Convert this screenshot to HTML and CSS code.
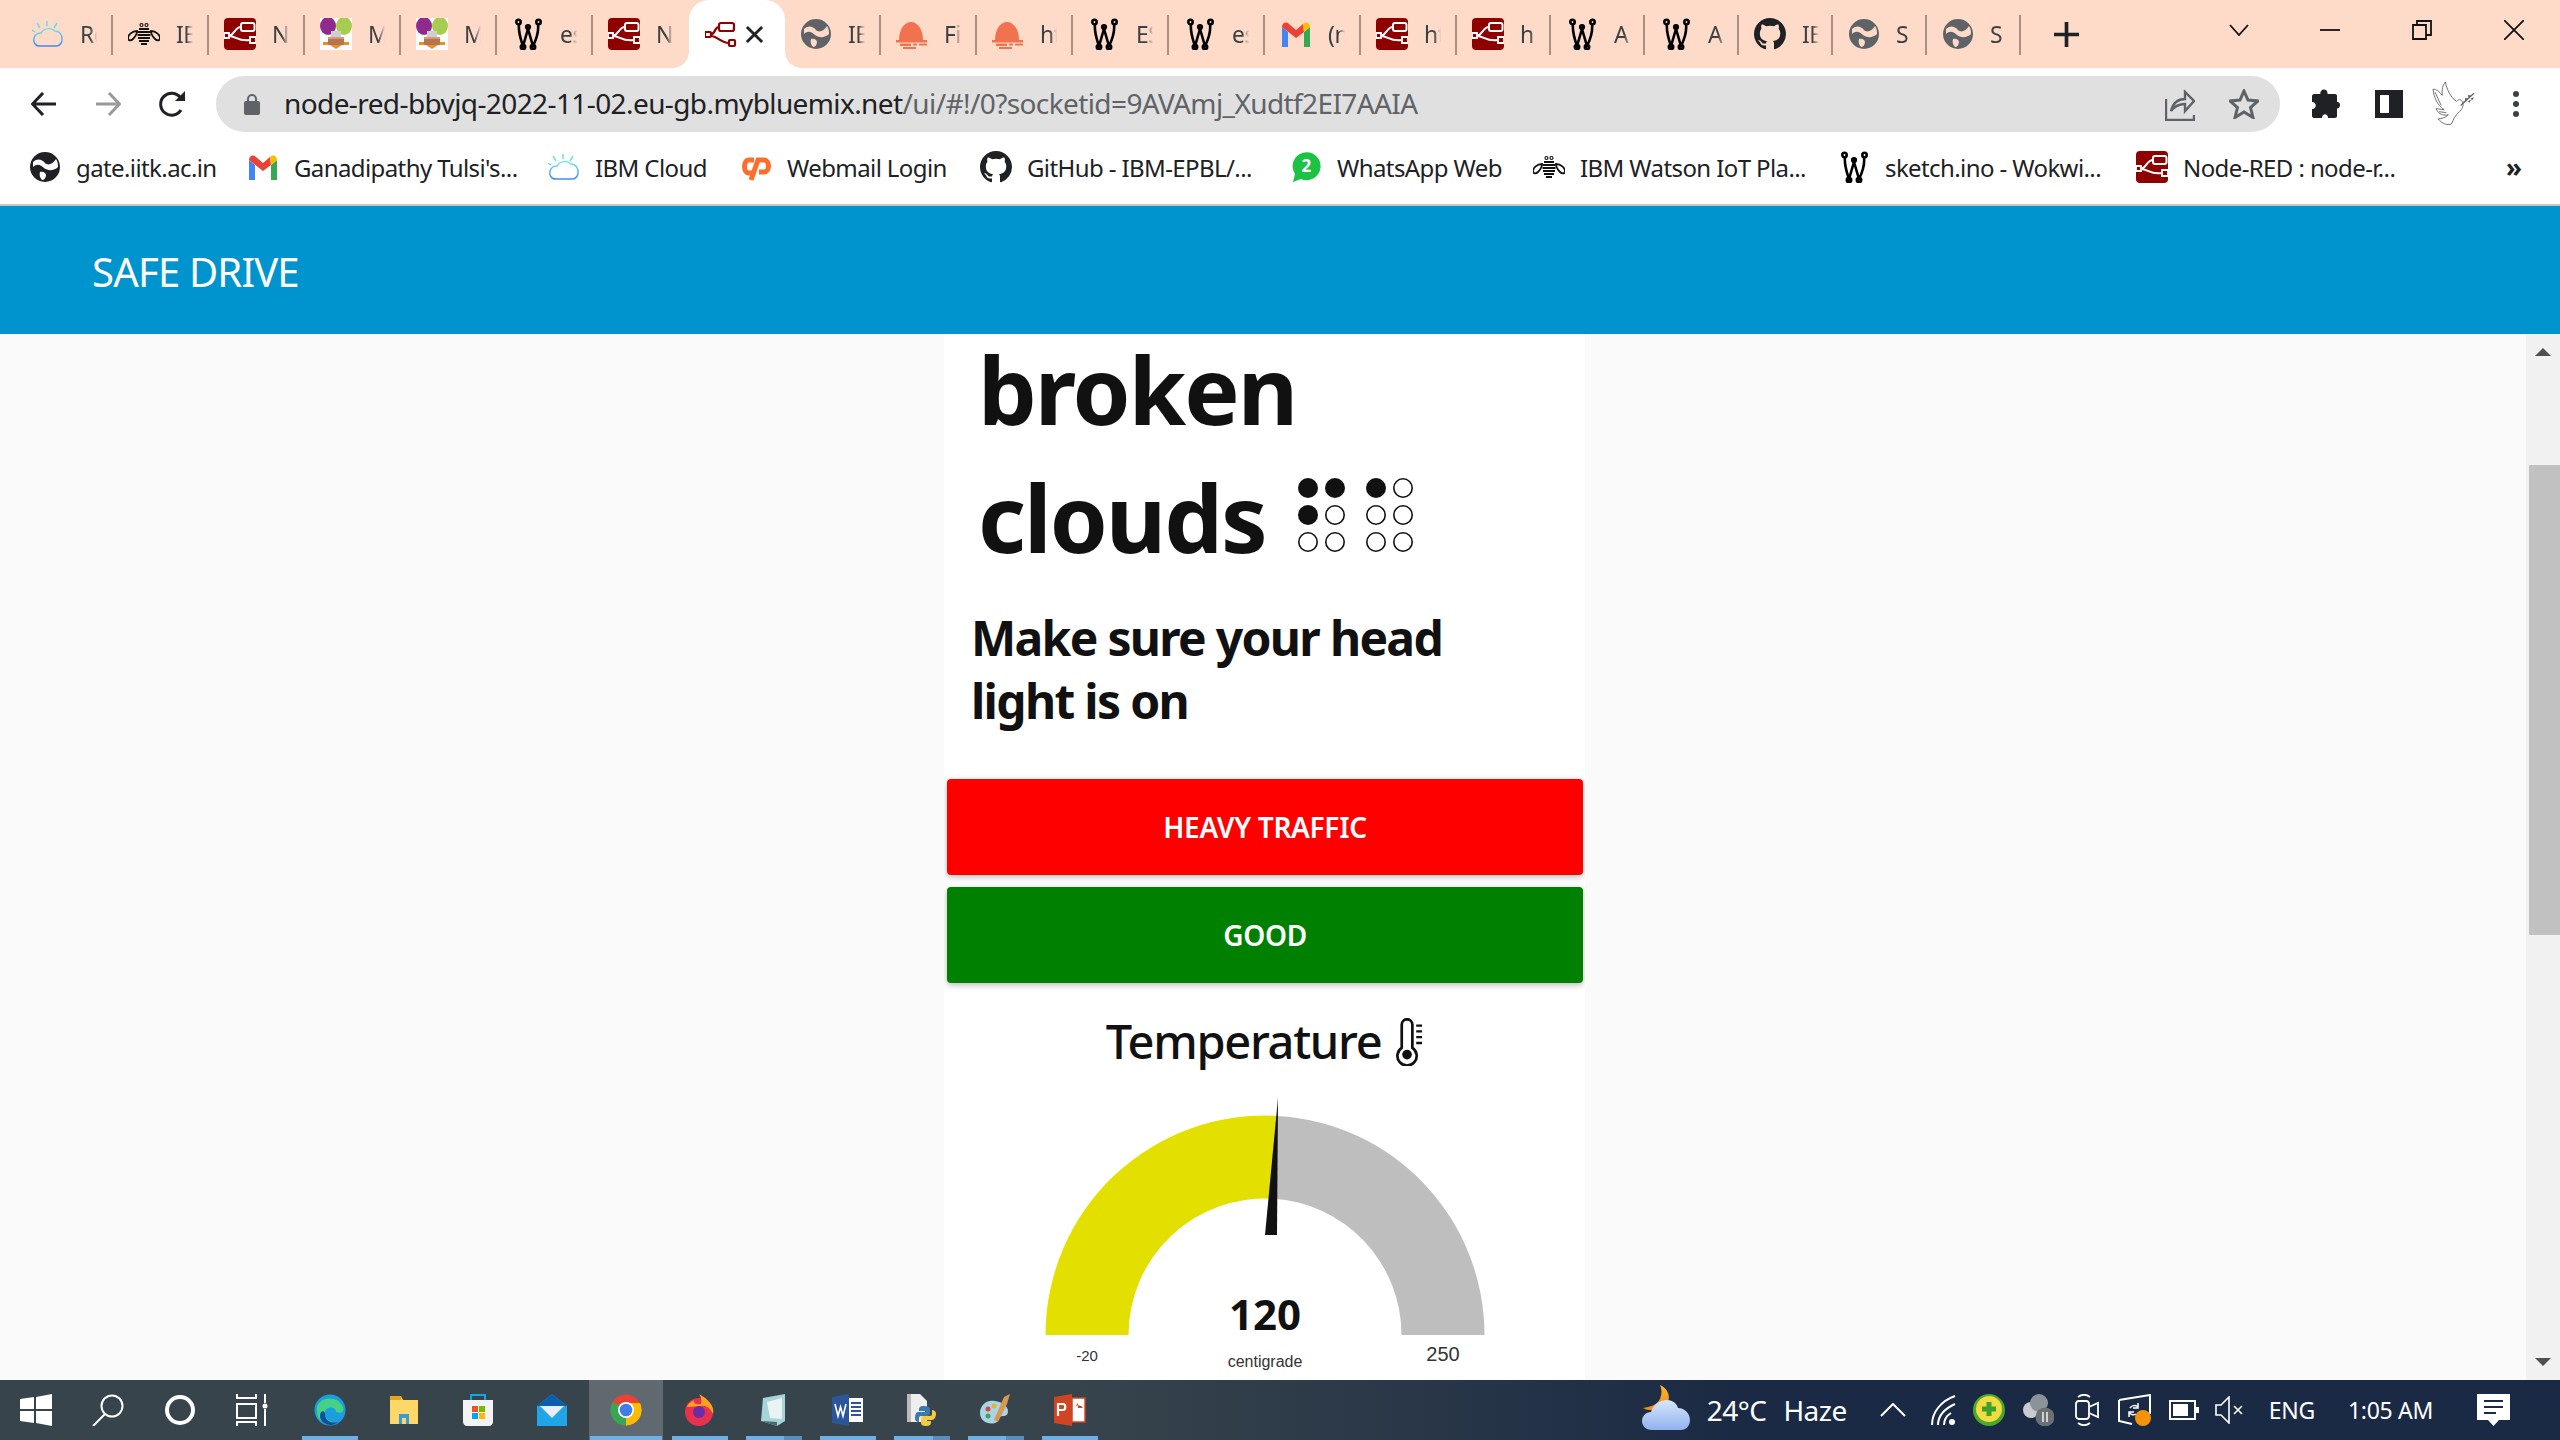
FILE: index.html
```html
<!DOCTYPE html>
<html lang="en">
<head>
<meta charset="utf-8">
<title>Node-RED Dashboard</title>
<link rel="stylesheet" href="styles.css">
</head>
<body>
<svg class="defs" width="0" height="0" aria-hidden="true">
  <defs>
    <linearGradient id="cl" x1="0" y1="0" x2="0" y2="1"><stop offset="0" stop-color="#7fe0e8"/><stop offset="1" stop-color="#3f8cf5"/></linearGradient>
    <linearGradient id="wcloud" x1="0" y1="0" x2="0" y2="1"><stop offset="0" stop-color="#d8e6fb"/><stop offset="1" stop-color="#8fb2ee"/></linearGradient>
    <linearGradient id="wmoon" x1="0" y1="0" x2="0" y2="1"><stop offset="0" stop-color="#ffb92e"/><stop offset="1" stop-color="#f08a18"/></linearGradient>
    <symbol id="i-nr" viewBox="0 0 32 32"><rect width="32" height="32" rx="4" fill="#8f0000"/><g fill="none" stroke="#fff" stroke-width="2"><rect x="17" y="5" width="13.500" height="8" rx="2"/><path d="M5 17.500C10 17.500 11 9 17 9M5 18C12 18 14 24 26.500 22"/></g><path d="M0 15H5V20H0ZM26 19H32V25H26Z" fill="#8f0000" stroke="#fff" stroke-width="1.800"/></symbol>
    <symbol id="i-nro" viewBox="0 0 32 32"><g fill="none" stroke="#8f0000" stroke-width="2.200"><rect x="14" y="5" width="15" height="8" rx="2"/><path d="M6 16C11 16 9 9 14 9M6 18C12 18 16 25 24 25"/><rect x="0" y="14" width="6" height="5" rx="1"/><rect x="24" y="22" width="6" height="6" rx="1"/></g></symbol>
    <symbol id="i-w" viewBox="0 0 32 32"><g fill="none" stroke="#000" stroke-width="2.600"><path d="M7 6C6 14 9 22 11 28L16 11L21 28C24 22 27 14 26 6"/><circle cx="6.500" cy="4" r="2.200"/><circle cx="26.500" cy="4" r="2.200"/><circle cx="16" cy="9" r="1.800"/><circle cx="11" cy="29" r="2.200"/><circle cx="21" cy="29" r="2.200"/></g></symbol>
    <symbol id="i-globe" viewBox="0 0 32 32"><path fill="currentColor" fill-rule="evenodd" d="M16 1A15 15 0 1 0 16 31A15 15 0 1 0 16 1ZM4 11C8 7 13 8 16 12C19 15 24 13 27 8C29 11 29 14 29 16C25 20 19 20 15 17C12 14 8 12 4 16ZM11 21C14 20 17 22 17 24C17 27 15 29 13 29C11 27 10 24 11 21Z"/></symbol>
    <symbol id="i-gh" viewBox="0 0 16 16"><path fill="currentColor" d="M8 0C3.58 0 0 3.58 0 8c0 3.54 2.29 6.53 5.47 7.59.4.07.55-.17.55-.38 0-.19-.01-.82-.01-1.49-2.01.37-2.53-.49-2.69-.94-.09-.23-.48-.94-.82-1.13-.28-.15-.68-.52-.01-.53.63-.01 1.08.58 1.23.82.72 1.21 1.87.87 2.33.66.07-.52.28-.87.51-1.07-1.78-.2-3.64-.89-3.64-3.95 0-.87.31-1.59.82-2.15-.08-.2-.36-1.02.08-2.12 0 0 .67-.21 2.2.82.64-.18 1.32-.27 2-.27.68 0 1.36.09 2 .27 1.53-1.04 2.2-.82 2.2-.82.44 1.1.16 1.92.08 2.12.51.56.82 1.27.82 2.15 0 3.07-1.87 3.75-3.65 3.95.29.25.54.73.54 1.48 0 1.07-.01 1.93-.01 2.2 0 .21.15.46.55.38A8.013 8.013 0 0016 8c0-4.42-3.58-8-8-8z"/></symbol>
    <symbol id="i-gmail" viewBox="0 0 32 32"><path d="M2 9V29H8V14Z" fill="#4285f4"/><path d="M30 9V29H24V14Z" fill="#34a853"/><path d="M2 9C2 5 6 3 9 6L16 12L23 6L24 14L16 20L2 9Z" fill="#ea4335"/><path d="M23 6C26 3 30 5 30 9L24 14Z" fill="#fbbc04"/></symbol>
    <symbol id="i-cloud" viewBox="0 0 32 32"><path d="M8 28C3 28 1 24 2 20C3 17 6 15 9 15C12 10 19 9 23 13C28 13 31 18 30 23C29 26 27 28 24 28Z" fill="none" stroke="url(#cl)" stroke-width="1.500"/><path d="M15 8V3M8 10L5 5M22 10L25 5M3 14L0 12" stroke="#6fdcea" stroke-width="1.500"/></symbol>
    <symbol id="i-bee" viewBox="0 0 32 32"><circle cx="13.500" cy="7" r="1.500" fill="none" stroke="#111" stroke-width="1.200"/><circle cx="18.500" cy="7" r="1.500" fill="none" stroke="#111" stroke-width="1.200"/><path d="M11 11H21M9.500 14H22.500M9.500 17H22.500M10 20H22M11 23H21M13 26H19" stroke="#111" stroke-width="2"/><path d="M9 13C4 13 0 17 0 20C0 23 3 23 5 21C7 19 9 16 9 13ZM23 13C28 13 32 17 32 20C32 23 29 23 27 21C25 19 23 16 23 13Z" fill="none" stroke="#111" stroke-width="1.800"/></symbol>
    <symbol id="i-bal" viewBox="0 0 32 32"><rect width="32" height="32" fill="#fff"/><ellipse cx="8" cy="8" rx="8" ry="9" fill="#8f2b8b"/><ellipse cx="24" cy="8" rx="8" ry="9" fill="#a6cc50"/><rect x="11" y="13" width="10" height="6" fill="#cfcfd4"/><rect x="8" y="19" width="16" height="8" fill="#b5744b"/><path d="M8 19H24V21H8Z" fill="#d99a6c"/><path d="M3 24H8V27H3ZM24 24H29V27H24ZM10 27H22L16 31Z" fill="#f08a24"/></symbol>
    <symbol id="i-bell" viewBox="0 0 32 32"><path d="M3 22C3 12 8 4 15 4C22 4 27 12 27 22Z" fill="#f0724f"/><path d="M0 22H31V24.500H0ZM4 25.500H15V28H4ZM17 25.500H21V27.500H17ZM23 25.500H31V27.500H23ZM7 29H20V31H7Z" fill="#f0724f"/></symbol>
    <symbol id="i-cp" viewBox="0 0 32 32"><g fill="none" stroke="#ff6c2c" stroke-width="5"><path d="M14 9H9C3 9 3 22 9 22H13"/><path d="M11 29L18 9H24C30 9 30 21 24 21H19"/></g></symbol>
    <symbol id="i-wa" viewBox="0 0 32 32"><path d="M3 31L5 23A14 14 0 1 1 11 28Z" fill="#1cc244"/><text x="16" y="21" class="wa-num">2</text></symbol>
    <symbol id="i-puzzle" viewBox="0 0 30 30"><path d="M11 2C14 -1 18 1 17.500 5H25C26.500 5 27 6 27 7V13C31 12 31 20 27 19.500V27C27 28 26 29 25 29H18C18 24 12 24 12 29H4C3 29 2 28 2 27V20C7 20 7 13 2 13V7C2 6 3 5 4 5H10.500C10 4 10.500 3 11 2Z" fill="#202124"/></symbol>
    <symbol id="i-dove" viewBox="12 7 43 43"><g fill="none" stroke="#666" stroke-width=".9"><path d="M25 7C21 12 22 17 22 20C19 16 16 14 13 14C14 22 17 30 24 34C20 34 18 33 16 33C18 39 24 40 28 39C25 42 21 43 18 43C21 47 27 50 31 48C33 44 34 40 38 37C42 33 43 30 42 27L46 25"/><path d="M25 7C27 15 30 22 36 26C38 24 40 23 42 27M15 17L21 30M19 36L26 37"/><path d="M40 30L53 18" stroke-width="1.200"/></g><path d="M44 23L47 23L45 26ZM47 20L50 20L48 23ZM47 26L50 24L49 27ZM50 23L53 22L51 25Z" fill="#555"/></symbol>
  </defs>
</svg>

<div class="window">
  <div class="tabstrip">
    <div class="tab"><svg class="tab-ico"><use href="#i-cloud"/></svg><span class="tab-text">Re</span></div>
    <div class="tab"><svg class="tab-ico"><use href="#i-bee"/></svg><span class="tab-text">IB</span></div>
    <div class="tab"><svg class="tab-ico"><use href="#i-nr"/></svg><span class="tab-text">N</span></div>
    <div class="tab"><svg class="tab-ico"><use href="#i-bal"/></svg><span class="tab-text">M</span></div>
    <div class="tab"><svg class="tab-ico"><use href="#i-bal"/></svg><span class="tab-text">M</span></div>
    <div class="tab"><svg class="tab-ico"><use href="#i-w"/></svg><span class="tab-text">es</span></div>
    <div class="tab tab-before-active"><svg class="tab-ico"><use href="#i-nr"/></svg><span class="tab-text">N</span></div>
    <div class="tab tab-active"><svg class="tab-ico"><use href="#i-nro"/></svg><svg class="tab-close" viewBox="0 0 20 20"><path d="M2 2L18 18M18 2L2 18"/></svg></div>
    <div class="tab"><svg class="tab-ico globe-t"><use href="#i-globe"/></svg><span class="tab-text">IB</span></div>
    <div class="tab"><svg class="tab-ico"><use href="#i-bell"/></svg><span class="tab-text">Fi</span></div>
    <div class="tab"><svg class="tab-ico"><use href="#i-bell"/></svg><span class="tab-text">ht</span></div>
    <div class="tab"><svg class="tab-ico"><use href="#i-w"/></svg><span class="tab-text">ES</span></div>
    <div class="tab"><svg class="tab-ico"><use href="#i-w"/></svg><span class="tab-text">es</span></div>
    <div class="tab"><svg class="tab-ico"><use href="#i-gmail"/></svg><span class="tab-text">(n</span></div>
    <div class="tab"><svg class="tab-ico"><use href="#i-nr"/></svg><span class="tab-text">ht</span></div>
    <div class="tab"><svg class="tab-ico"><use href="#i-nr"/></svg><span class="tab-text">h</span></div>
    <div class="tab"><svg class="tab-ico"><use href="#i-w"/></svg><span class="tab-text">A</span></div>
    <div class="tab"><svg class="tab-ico"><use href="#i-w"/></svg><span class="tab-text">A</span></div>
    <div class="tab"><svg class="tab-ico gh-t"><use href="#i-gh"/></svg><span class="tab-text">IE</span></div>
    <div class="tab"><svg class="tab-ico globe-t"><use href="#i-globe"/></svg><span class="tab-text">S</span></div>
    <div class="tab"><svg class="tab-ico globe-t"><use href="#i-globe"/></svg><span class="tab-text">S</span></div>
    <svg class="newtab" viewBox="0 0 24 24"><path d="M12 0V24M0 12H24"/></svg>
    <div class="winctl">
      <svg class="wc-chev" viewBox="0 0 20 12"><path d="M1 1L10 11L19 1"/></svg>
      <svg class="wc-min" viewBox="0 0 20 2"><path d="M0 1H20"/></svg>
      <svg class="wc-max" viewBox="0 0 20 20"><path d="M1 5H14V19H1ZM5 5V1H19V15H14"/></svg>
      <svg class="wc-x" viewBox="0 0 20 20"><path d="M0 0L20 20M20 0L0 20"/></svg>
    </div>
  </div>

  <div class="toolbar">
    <svg class="nav nav-back" viewBox="0 0 26 24"><path d="M25 12H2M12 1L1.500 12L12 23"/></svg>
    <svg class="nav nav-fwd" viewBox="0 0 26 24"><path d="M1 12H24M14 1L24.500 12L14 23"/></svg>
    <svg class="nav nav-reload" viewBox="0 0 28 28"><path d="M23 20A11 11 0 1 1 22 7" fill="none"/><path d="M27 1V11H17Z" class="solid"/></svg>
    <div class="omnibox">
      <svg class="lock" viewBox="0 0 16 22"><path d="M4 9V6A4 4 0 0 1 12 6V9" fill="none" stroke="#5f6368" stroke-width="2"/><rect y="8" width="16" height="14" rx="2" fill="#5f6368"/></svg>
      <span class="url"><span class="url-host">node-red-bbvjq-2022-11-02.eu-gb.mybluemix.net</span>/ui/#!/0?socketid=9AVAmj_Xudtf2EI7AAIA</span>
      <svg class="om-share" viewBox="0 0 30 34"><path d="M1 12V33H29V28M6 24C8 16 13 12 20 12V5L29 14L20 24V17C14 17 9 20 6 24Z"/></svg>
      <svg class="om-star" viewBox="0 0 30 30"><path d="M15 2L19 11L29 12L21.500 18.500L24 28.500L15 23L6 28.500L8.500 18.500L1 12L11 11Z"/></svg>
    </div>
    <svg class="tb-puzzle"><use href="#i-puzzle"/></svg>
    <svg class="tb-side" viewBox="0 0 28 28"><path d="M0 0H28V28H0ZM5 5V23H14V5Z" fill-rule="evenodd"/></svg>
    <svg class="tb-dove"><use href="#i-dove"/></svg>
    <svg class="tb-kebab" viewBox="0 0 6 26"><circle cx="3" cy="3" r="3"/><circle cx="3" cy="13" r="3"/><circle cx="3" cy="23" r="3"/></svg>
  </div>

  <div class="bookmarks">
    <a class="bm"><svg class="bm-ico globe-b"><use href="#i-globe"/></svg><span>gate.iitk.ac.in</span></a>
    <a class="bm"><svg class="bm-ico"><use href="#i-gmail"/></svg><span>Ganadipathy Tulsi's...</span></a>
    <a class="bm"><svg class="bm-ico"><use href="#i-cloud"/></svg><span>IBM Cloud</span></a>
    <a class="bm"><svg class="bm-ico"><use href="#i-cp"/></svg><span>Webmail Login</span></a>
    <a class="bm"><svg class="bm-ico gh-b"><use href="#i-gh"/></svg><span>GitHub - IBM-EPBL/...</span></a>
    <a class="bm"><svg class="bm-ico"><use href="#i-wa"/></svg><span>WhatsApp Web</span></a>
    <a class="bm"><svg class="bm-ico"><use href="#i-bee"/></svg><span>IBM Watson IoT Pla...</span></a>
    <a class="bm"><svg class="bm-ico"><use href="#i-w"/></svg><span>sketch.ino - Wokwi...</span></a>
    <a class="bm"><svg class="bm-ico"><use href="#i-nr"/></svg><span>Node-RED : node-r...</span></a>
    <span class="bm-more">»</span>
  </div>

  <header class="app-header">SAFE DRIVE</header>

  <main class="viewport">
    <div class="stage">
      <section class="card">
        <h1 class="weather">broken<br>clouds <svg class="braille" viewBox="0 0 118 76"><g class="b-on"><circle cx="11" cy="11" r="10"/><circle cx="38" cy="11" r="10"/><circle cx="79" cy="11" r="10"/><circle cx="11" cy="38" r="10"/></g><g class="b-off"><circle cx="106" cy="11" r="9.200"/><circle cx="38" cy="38" r="9.200"/><circle cx="79" cy="38" r="9.200"/><circle cx="106" cy="38" r="9.200"/><circle cx="11" cy="65" r="9.200"/><circle cx="38" cy="65" r="9.200"/><circle cx="79" cy="65" r="9.200"/><circle cx="106" cy="65" r="9.200"/></g></svg></h1>
        <h2 class="advice">Make sure your head light is on</h2>
        <div class="status status-red">HEAVY TRAFFIC</div>
        <div class="status status-green">GOOD</div>
        <h3 class="gauge-title">Temperature <svg class="thermo" viewBox="0 0 30 48"><path d="M8 30V6A5.500 5.500 0 0 1 19 6V30A10 10 0 1 1 8 30Z" fill="none" stroke="#111" stroke-width="2.800"/><circle cx="13.500" cy="37" r="5" fill="#111"/><path d="M23 7H29M23 13H29M23 19H29M23 25H29" stroke="#111" stroke-width="2.400"/></svg></h3>
        <svg class="gauge" viewBox="0 0 640 290">
          <path d="M101.500 245A219.500 219.500 0 0 1 333.800 25.900L328.900 108.700A136.500 136.500 0 0 0 184.500 245Z" fill="#e3e000"/>
          <path d="M333.800 25.900A219.500 219.500 0 0 1 540.500 245L457.500 245A136.500 136.500 0 0 0 328.900 108.700Z" fill="#bebebe"/>
          <path d="M334 8L321 145L333 145Z" fill="#111"/>
          <text x="321" y="240" class="g-val">120</text>
          <text x="143" y="271" class="g-min">-20</text>
          <text x="321" y="277" class="g-unit">centigrade</text>
          <text x="499" y="271" class="g-max">250</text>
        </svg>
      </section>
    </div>
    <div class="scrollbar">
      <span class="arrow-up"></span>
      <div class="thumb"></div>
      <span class="arrow-down"></span>
    </div>
  </main>

  <footer class="taskbar">
    <div class="tb-left">
      <div class="tk tk-sys"><svg class="tk-i" viewBox="0 0 32 32"><path d="M0 5L14 3V15H0ZM16 3L32 0V15H16ZM0 17H14V29L0 27ZM16 17H32V32L16 29Z" fill="#fff"/></svg></div>
      <div class="tk tk-sys"><svg class="tk-i" viewBox="0 0 32 32"><circle cx="20" cy="12" r="10.500" fill="none" stroke="#fff" stroke-width="2"/><path d="M13 20L1 32" stroke="#fff" stroke-width="2"/></svg></div>
      <div class="tk tk-sys"><svg class="tk-i" viewBox="0 0 32 32"><circle cx="16" cy="16" r="13" fill="none" stroke="#fff" stroke-width="4"/></svg></div>
      <div class="tk tk-sys"><svg class="tk-i" viewBox="0 0 32 32"><g fill="none" stroke="#fff" stroke-width="2"><path d="M1 0V4H20V0M1 10H20V24H1ZM1 32V28H20V32M29 0V9M29 15V32"/></g><circle cx="29" cy="12" r="2.500" fill="#fff"/></svg></div>
      <div class="tk tk-first"><svg class="tk-i" viewBox="0 0 32 32"><circle cx="16" cy="16" r="15.500" fill="#1b9de0"/><path d="M3 12C8 2 24 2 29 13C31 18 26 20 22 18C22 12 12 12 11 18C10 24 16 29 23 29C14 33 3 28 3 18Z" fill="#45d287"/><path d="M11 20C11 27 18 30 24 28C18 34 6 30 6 22C6 16 11 16 11 20Z" fill="#0d4f9e"/></svg></div>
      <div class="tk"><svg class="tk-i" viewBox="0 0 32 32"><path d="M2 2H13L15 6H30V30H2Z" fill="#fdd868"/><path d="M2 2H13V6H2Z" fill="#e5a31e"/><path d="M11 30V20H21V30H18V24H14V30Z" fill="#3a9ad9"/></svg></div>
      <div class="tk"><svg class="tk-i" viewBox="0 0 32 32"><path d="M1 6H31V28C31 30 29 32 27 32H5C3 32 1 30 1 28Z" fill="#f3f3f3"/><path d="M9 6V1H23V6" fill="none" stroke="#0ea5e9" stroke-width="2"/><rect x="10" y="12" width="6" height="6" fill="#f25022"/><rect x="17" y="12" width="6" height="6" fill="#7fba00"/><rect x="10" y="19" width="6" height="6" fill="#00a4ef"/><rect x="17" y="19" width="6" height="6" fill="#ffb900"/></svg></div>
      <div class="tk"><svg class="tk-i" viewBox="0 0 32 32"><path d="M1 12L16 0L31 12V32H1Z" fill="#1fa5e8"/><path d="M1 12L16 0L31 12Z" fill="#0a5fb0"/><path d="M4 12H28L16 24Z" fill="#e9eef2"/></svg></div>
      <div class="tk tk-chrome"><svg class="tk-i" viewBox="0 0 32 32"><circle cx="16" cy="16" r="15.500" fill="#ea4335"/><path d="M16 16L2.500 24A15.500 15.500 0 0 1 3 8Z" fill="#34a853"/><path d="M16 16L2.500 24A15.500 15.500 0 0 0 16 31.500Z" fill="#34a853"/><path d="M16 9H30A15.500 15.500 0 0 1 16 31.500L16 16Z" fill="#fbbc04"/><circle cx="16" cy="16" r="8" fill="#fff"/><circle cx="16" cy="16" r="6.300" fill="#3f7ee8"/></svg></div>
      <div class="tk"><svg class="tk-i" viewBox="0 0 32 32"><circle cx="15" cy="18" r="14" fill="#e8304f"/><path d="M3 13C5 8 8 8 10 6C9 10 13 11 17 10C18 6 17 3 15 0C24 5 31 12 29 20C26 14 22 11 17 12Z" fill="#ffa21c"/><circle cx="15" cy="18" r="6" fill="#6a2ca8"/></svg></div>
      <div class="tk"><svg class="tk-i" viewBox="0 0 32 32"><path d="M5 4L27 0V27L19 32L3 27Z" fill="#a7d4d8"/><path d="M9 8L24 4V25L12 24Z" fill="#eaf3f4"/><path d="M3 27L19 32V28Z" fill="#4a6a6f"/></svg></div>
      <div class="tk"><svg class="tk-i" viewBox="0 0 32 32"><path d="M0 3L17 0V32L0 29Z" fill="#2b579a"/><rect x="17" y="4" width="14" height="24" fill="#fff"/><path d="M19 9H29M19 13H29M19 17H29M19 21H29" stroke="#2b579a" stroke-width="2"/><path d="M3 10L6 22L8.500 13L11 22L14 10" fill="none" stroke="#fff" stroke-width="1.600"/></svg></div>
      <div class="tk"><svg class="tk-i" viewBox="0 0 32 32"><path d="M1 0H14L21 7V28H1Z" fill="#eee"/><path d="M1 0H5V28H1Z" fill="#bbb"/><path d="M18 12C13 12 13 14 13 17H19V18H12C10 18 9 21 9 24C9 27 11 28 13 28V24C13 22 15 22 17 22H21C23 22 24 21 24 19V15C24 13 22 12 18 12Z" fill="#3a78b0"/><path d="M19 32C25 32 25 30 25 27H19V26H26C28 26 30 23 30 20C30 17 28 16 26 16V20C26 22 24 22 22 22H18C16 22 15 23 15 25V29C15 31 17 32 19 32Z" fill="#f7ca3e"/></svg></div>
      <div class="tk"><svg class="tk-i" viewBox="0 0 32 32"><path d="M15 7C6 5 0 12 0 19C0 27 8 31 15 29C19 28 17 25 19 23C22 21 28 24 28 17C28 12 22 8 15 7Z" fill="#a9d3e6"/><circle cx="8" cy="15" r="2.500" fill="#d14a3d"/><circle cx="14" cy="12" r="2.500" fill="#e6b32e"/><circle cx="8" cy="22" r="2.500" fill="#4a9d55"/><path d="M30 0L24 3L14 26L18 28L27 10Z" fill="#d69a4e"/></svg></div>
      <div class="tk"><svg class="tk-i" viewBox="0 0 32 32"><path d="M0 3L18 0V32L0 29Z" fill="#d04423"/><rect x="18" y="4" width="13" height="24" fill="#fff" stroke="#d04423" stroke-width="1.500"/><path d="M4 22V10H9C12 10 12 16 9 16H4" fill="none" stroke="#fff" stroke-width="2.200"/><path d="M20 14A5 5 0 0 1 29 14H24V9" fill="#d04423"/></svg></div>
      <div class="run-bars">
        <span class="rb rb-edge"></span><span class="rb rb-chrome"></span><span class="rb rb-ff"></span><span class="rb rb-note"></span><span class="rb rb-note2"></span><span class="rb rb-word"></span><span class="rb rb-py"></span><span class="rb rb-py2"></span><span class="rb rb-paint"></span><span class="rb rb-paint2"></span><span class="rb rb-ppt"></span>
      </div>
    </div>
    <div class="tray">
      <svg class="tr-weather" viewBox="0 0 48 46"><path d="M18 0C29 5 30 18 20 23C13 26 6 26 1 23C8 22 15 20 18 14C20 9 20 4 18 0Z" fill="url(#wmoon)"/><path d="M10 45C3 45 0 40 0 36C0 31 4 27 9 27C11 19 19 15 25 15C31 15 35 19 36 23C43 23 48 29 48 35C48 41 44 45 39 45Z" fill="url(#wcloud)"/></svg>
      <span class="tr-weathertext">24°C</span>
      <span class="tr-haze">Haze</span>
      <svg class="tr-caret" viewBox="0 0 26 14"><path d="M1 13L13 1L25 13"/></svg>
      <svg class="tr-wifi" viewBox="0 0 26 30"><g fill="none" stroke="#fff" stroke-width="2"><path d="M1 30C1 17 10 6 24 1"/><path d="M7 30C7 21 13 14 24 9"/><path d="M13 30C13 25 15 21 20 18"/></g><circle cx="21" cy="27" r="3" fill="#fff"/></svg>
      <svg class="tr-green" viewBox="0 0 32 32"><circle cx="16" cy="16" r="16" fill="#4aa82f"/><circle cx="16" cy="15" r="13" fill="#f0dc40"/><path d="M16 8V22M9 15H23" stroke="#3f9e2d" stroke-width="5"/></svg>
      <svg class="tr-cloudp" viewBox="0 0 33 32"><circle cx="10" cy="16" r="8" fill="#c8ccd0"/><circle cx="18" cy="9" r="9" fill="#8b9299"/><circle cx="24" cy="23" r="9.500" fill="#6b7075"/><path d="M22 18V28M26 18V28" stroke="#eee" stroke-width="1.500"/></svg>
      <svg class="tr-cam" viewBox="0 0 24 32"><g fill="none" stroke="#fff" stroke-width="1.800"><rect x="1" y="7" width="13" height="18" rx="3"/><path d="M14 13L23 9V23L14 19M3 3C7 0 11 0 15 3M3 29C7 32 11 32 15 29"/></g></svg>
      <svg class="tr-sync" viewBox="0 0 34 32"><path d="M1 6L32 1V20M1 6V27L14 30" fill="none" stroke="#fff" stroke-width="2"/><path d="M12 14C14 11 18 11 20 13M20 9V14H15M18 20C15 22 12 20 11 18M11 23V18H16" fill="none" stroke="#fff" stroke-width="1.500"/><circle cx="25" cy="24" r="8" fill="#f59408"/></svg>
      <svg class="tr-batt" viewBox="0 0 30 20"><rect x="1" y="1" width="25" height="18" fill="none" stroke="#fff" stroke-width="2"/><rect x="4" y="4" width="15" height="12" fill="#fff"/><rect x="27" y="7" width="3" height="6" fill="#fff"/></svg>
      <svg class="tr-spk" viewBox="0 0 28 28"><path d="M1 9H6L14 1V27L6 19H1Z" fill="none" stroke="#fff" stroke-width="1.600"/><path d="M19 10L27 18M27 10L19 18" stroke="#fff" stroke-width="1.600"/></svg>
      <span class="tr-eng">ENG</span>
      <span class="tr-time">1:05 AM</span>
      <svg class="tr-notif" viewBox="0 0 33 32"><path d="M0 0H33V26H22L16.500 32L11 26H0Z" fill="#fff"/><path d="M7 7H26M7 13H26M7 19H19" stroke="#1b2a43" stroke-width="2.200"/></svg>
    </div>
  </footer>
</div>
</body>
</html>
```
FILE: styles.css
```css
* { box-sizing: border-box; }
html, body { margin: 0; padding: 0; width: 2560px; height: 1440px; overflow: hidden; }
body { font-family: "Noto Sans", "Open Sans", sans-serif; color: #111; background: #fff; }
.defs { position: absolute; }
.wa-num { font: 700 17px "Noto Sans", sans-serif; fill: #fff; text-anchor: middle; }
svg { display: block; flex: none; overflow: hidden; }
.window { display: flex; flex-direction: column; width: 2560px; height: 1440px; }

/* tab strip */
.tabstrip { height: 68px; flex: none; background: #fddbc8; display: flex; align-items: stretch; padding-left: 17px; }
.tab { position: relative; width: 96px; flex: none; display: flex; align-items: center; padding: 0 0 0 15px; }
.tab:nth-child(n+16) { width: 94px; }
.tab::after { content: ""; position: absolute; right: 0; top: 15px; bottom: 13px; width: 2px; background: #ab8f80; }
.tab-before-active::after, .tab-active::after { display: none; }
.tab-ico { width: 32px; height: 32px; color: #5f6368; margin-right: 16px; }
.tab-text { width: 17px; overflow: hidden; white-space: nowrap; font-size: 23px; letter-spacing: -.5px; color: #3c4043; -webkit-mask-image: linear-gradient(90deg, #000 60%, transparent); mask-image: linear-gradient(90deg, #000 60%, transparent); }
.gh-t { color: #202124; }
.tab-active { background: #fff; border-radius: 20px 20px 0 0; padding-left: 16px; }
.tab-active::before { content: ""; position: absolute; left: -16px; right: -16px; bottom: 0; height: 16px; z-index: 0; background: radial-gradient(circle 16px at 0 0, transparent 15.500px, #fff 16px) left bottom / 16px 16px no-repeat, radial-gradient(circle 16px at 100% 0, transparent 15.500px, #fff 16px) right bottom / 16px 16px no-repeat; }
.tab-active .tab-ico { margin-right: 8px; }
.tab-close { width: 19px; height: 19px; fill: none; stroke: #202124; stroke-width: 3; }
.newtab { width: 25px; height: 25px; align-self: center; margin-left: 33px; fill: none; stroke: #202124; stroke-width: 3.500; }
.winctl { display: flex; align-items: center; margin-top: -8px; margin-left: auto; padding-right: 36px; }
.winctl svg { fill: none; stroke: #111; stroke-width: 1.800; }
.wc-chev { width: 20px; height: 12px; margin-right: 71px; }
.wc-min { width: 20px; height: 2px; margin-right: 72px; }
.wc-max { width: 20px; height: 20px; margin-right: 72px; }
.wc-x { width: 20px; height: 20px; }

/* toolbar */
.toolbar { height: 64px; flex: none; background: #fff; display: flex; align-items: center; padding-left: 31px; padding-top: 8px; }
.nav { fill: none; stroke-width: 3; }
.nav-back { width: 26px; height: 24px; stroke: #202124; }
.nav-fwd { width: 26px; height: 24px; stroke: #9a9a9a; margin-left: 38px; }
.nav-reload { width: 28px; height: 28px; stroke: #202124; margin-left: 37px; }
.nav-reload .solid { fill: #202124; stroke: none; }
.omnibox { width: 2064px; height: 56px; margin-left: 30px; border-radius: 28px; background: #e0e0e0; display: flex; align-items: center; padding-left: 28px; color: #5f6368; }
.lock { width: 16px; height: 22px; }
.url { margin-left: 24px; margin-top: -2px; font-size: 28px; line-height: 40px; white-space: nowrap; color: #5f6368; letter-spacing: -.6px; }
.url-host { color: #202124; }
.om-share { width: 30px; height: 34px; margin-left: auto; fill: none; stroke: #5f6368; stroke-width: 2.400; }
.om-star { width: 30px; height: 30px; margin-left: 34px; margin-right: 21px; fill: none; stroke: #5f6368; stroke-width: 3; }
.tb-puzzle { width: 30px; height: 30px; margin-left: 30px; }
.tb-side { width: 28px; height: 28px; margin-left: 35px; fill: #202124; }
.tb-dove { width: 44px; height: 44px; margin-left: 29px; }
.tb-kebab { width: 6px; height: 26px; margin-left: 37px; fill: #3c4043; }

/* bookmarks */
.bookmarks { height: 74px; flex: none; background: #fff; border-bottom: 2px solid #c4c7c9; display: grid; grid-template-columns: 218px 301px 192px 240px 310px 243px 305px 298px 372px 24px; align-items: center; padding-left: 29px; padding-bottom: 2px; }
.bm { display: flex; align-items: center; white-space: nowrap; font-size: 24px; letter-spacing: -.6px; color: #202124; }
.bm-ico { width: 32px; height: 32px; margin-right: 15px; }
.globe-b, .gh-b { color: #202124; }
.bm-more { font-size: 26px; font-weight: 700; color: #202124; line-height: 30px; margin-left: -2px; }

/* header */
.app-header { height: 128px; flex: none; background: #0094ce; color: #fff; font-size: 40px; line-height: 132px; padding-left: 92px; letter-spacing: -.8px; }

/* dashboard */
.viewport { flex: 1; min-height: 0; display: flex; background: #fafafa; overflow: hidden; }
.stage { flex: 1; display: flex; justify-content: center; padding-left: 3px; }
.card { width: 641px; background: #fff; overflow: hidden; display: flex; flex-direction: column; }
.weather { margin: -9px 0 0; padding-left: 34px; font-size: 93px; font-weight: 700; line-height: 128px; color: #111; letter-spacing: -2px; }
.braille { display: inline-block; width: 118px; height: 76px; margin-left: 9px; }
.b-on { fill: #111; }
.b-off { fill: #fff; stroke: #111; stroke-width: 1.600; }
.advice { margin: 25px 0 0; padding: 0 40px 0 27px; font-size: 48px; line-height: 63px; font-weight: 700; color: #111; letter-spacing: -1.7px; }
.status { flex: none; height: 96px; width: 636px; margin-left: 3px; border-radius: 4px; color: #fff; display: flex; align-items: center; justify-content: center; font-size: 28px; font-weight: 600; letter-spacing: -.3px; box-shadow: 0 2px 6px rgba(0,0,0,.28); }
.status-red { background: #f00; margin-top: 47px; }
.status-green { background: #008000; margin-top: 12px; }
.gauge-title { margin: 28px 0 0; font-size: 47px; font-weight: 500; line-height: 60px; color: #111; display: flex; justify-content: center; align-items: flex-start; letter-spacing: -1.3px; white-space: pre; }
.thermo { width: 29px; height: 48px; margin-top: 7px; margin-left: 2px; }
.gauge { width: 640px; height: 290px; margin-top: 19px; flex: none; }
.g-val { font: 700 42px "Noto Sans", sans-serif; fill: #111; text-anchor: middle; }
.g-min, .g-unit, .g-max { font-family: "Liberation Sans", sans-serif; fill: #333; text-anchor: middle; }
.g-min { font-size: 15px; }
.g-unit { font-size: 16px; }
.g-max { font-size: 20px; }

/* page scrollbar */
.scrollbar { width: 34px; flex: none; background: #f1f1f1; position: relative; }
.thumb { position: absolute; left: 3px; right: 0; top: 131px; height: 470px; background: #c1c1c1; }
.arrow-up { position: absolute; left: 9px; top: 14px; border: 8px solid transparent; border-top: 0; border-bottom-color: #505050; }
.arrow-down { position: absolute; left: 9px; bottom: 14px; border: 8px solid transparent; border-bottom: 0; border-top-color: #505050; }

/* taskbar */
.taskbar { height: 60px; flex: none; display: flex; align-items: center; position: relative; background: linear-gradient(90deg, #37444c 0, #37444c 42%, #1b2a44 68%, #1b2a44 100%); color: #fff; }
.tb-left { display: flex; align-items: center; height: 60px; position: relative; }
.tk { width: 74px; height: 60px; display: flex; align-items: center; justify-content: center; }
.tk-sys { width: 72px; }
.tk-first { margin-left: 5px; }
.tk-i { width: 32px; height: 32px; }
.tk-chrome { background: rgba(255,255,255,.2); }
.run-bars { position: absolute; left: 0; bottom: 0; height: 4px; width: 1120px; display: flex; }
.rb { height: 4px; background: #6cb0e6; flex: none; }
.rb-edge { width: 56px; margin-left: 302px; }
.rb-chrome { width: 72px; margin-left: 232px; }
.rb-ff { width: 56px; margin-left: 10px; }
.rb-note { width: 38px; margin-left: 18px; }
.rb-note2 { width: 18px; background: #5a8fbd; }
.rb-word { width: 56px; margin-left: 18px; }
.rb-py { width: 39px; margin-left: 18px; }
.rb-py2 { width: 17px; background: #5a8fbd; }
.rb-paint { width: 38px; margin-left: 18px; }
.rb-paint2 { width: 18px; background: #5a8fbd; }
.rb-ppt { width: 56px; margin-left: 18px; }

.tray { margin-left: auto; display: flex; align-items: center; height: 60px; padding-right: 50px; font-size: 25px; }
.tr-weather { width: 48px; height: 46px; margin-top: -4px; }
.tr-weathertext { margin-left: 17px; font-size: 28px; letter-spacing: -.5px; }
.tr-haze { margin-left: 17px; font-size: 28px; letter-spacing: -.5px; }
.tr-caret { width: 26px; height: 14px; margin-left: 33px; fill: none; stroke: #fff; stroke-width: 2; }
.tr-wifi { width: 26px; height: 30px; margin-left: 25px; }
.tr-green { width: 32px; height: 32px; margin-left: 16px; }
.tr-cloudp { width: 33px; height: 32px; margin-left: 16px; }
.tr-cam { width: 24px; height: 32px; margin-left: 21px; }
.tr-sync { width: 34px; height: 32px; margin-left: 19px; }
.tr-batt { width: 30px; height: 20px; margin-left: 17px; }
.tr-spk { width: 28px; height: 28px; margin-left: 16px; }
.tr-eng { margin-left: 26px; font-size: 23px; letter-spacing: -.3px; }
.tr-time { margin-left: 33px; font-size: 23px; letter-spacing: -.3px; }
.tr-notif { width: 33px; height: 32px; margin-left: 44px; }
```
